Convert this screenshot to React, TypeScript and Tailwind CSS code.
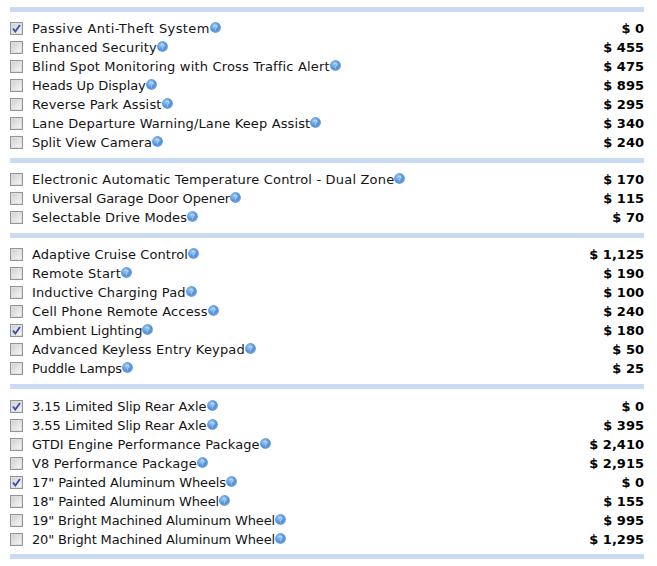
type Option = { label: string; price: string; fit: string; checked?: boolean };

// fit = per-row tracking, the reference font (Verdana) runs a bit different from DejaVu
const groups: { pad: string; options: Option[] }[] = [
  {
    pad: "pt-[7px] pb-[6px]",
    options: [
      { label: "Passive Anti-Theft System", price: "$ 0", checked: true, fit: "tracking-[0.4px]" },
      { label: "Enhanced Security", price: "$ 455", fit: "tracking-[0.18px]" },
      { label: "Blind Spot Monitoring with Cross Traffic Alert", price: "$ 475", fit: "tracking-[0.17px]" },
      { label: "Heads Up Display", price: "$ 895", fit: "tracking-[-0.06px]" },
      { label: "Reverse Park Assist", price: "$ 295", fit: "tracking-[0.16px]" },
      { label: "Lane Departure Warning/Lane Keep Assist", price: "$ 340", fit: "tracking-[0.13px]" },
      { label: "Split View Camera", price: "$ 240", fit: "tracking-[0.06px]" },
    ],
  },
  {
    pad: "pt-[7px] pb-[6px]",
    options: [
      { label: "Electronic Automatic Temperature Control - Dual Zone", price: "$ 170", fit: "tracking-[0.19px]" },
      { label: "Universal Garage Door Opener", price: "$ 115", fit: "tracking-[-0.07px]" },
      { label: "Selectable Drive Modes", price: "$ 70", fit: "tracking-[0.09px]" },
    ],
  },
  {
    pad: "pt-[7px] pb-[6px]",
    options: [
      { label: "Adaptive Cruise Control", price: "$ 1,125", fit: "tracking-[0.09px]" },
      { label: "Remote Start", price: "$ 190", fit: "tracking-[0.25px]" },
      { label: "Inductive Charging Pad", price: "$ 100", fit: "tracking-[0.14px]" },
      { label: "Cell Phone Remote Access", price: "$ 240", fit: "tracking-[0.17px]" },
      { label: "Ambient Lighting", price: "$ 180", checked: true, fit: "tracking-[-0.06px]" },
      { label: "Advanced Keyless Entry Keypad", price: "$ 50", fit: "tracking-[0.17px]" },
      { label: "Puddle Lamps", price: "$ 25", fit: "tracking-[-0.08px]" },
    ],
  },
  {
    pad: "pt-[8px] pb-[5px]",
    options: [
      { label: "3.15 Limited Slip Rear Axle", price: "$ 0", checked: true, fit: "tracking-[-0.04px]" },
      { label: "3.55 Limited Slip Rear Axle", price: "$ 395", fit: "tracking-[-0.04px]" },
      { label: "GTDI Engine Performance Package", price: "$ 2,410", fit: "tracking-[0.1px]" },
      { label: "V8 Performance Package", price: "$ 2,915", fit: "tracking-[0.14px]" },
      { label: '17" Painted Aluminum Wheels', price: "$ 0", checked: true, fit: "tracking-[-0.11px]" },
      { label: '18" Painted Aluminum Wheel', price: "$ 155", fit: "tracking-[-0.12px]" },
      { label: '19" Bright Machined Aluminum Wheel', price: "$ 995", fit: "tracking-[-0.15px]" },
      { label: '20" Bright Machined Aluminum Wheel', price: "$ 1,295", fit: "tracking-[-0.15px]" },
    ],
  },
];

function CheckBox({ checked }: { checked?: boolean }) {
  return (
    <span className="w-[13px] h-[13px] shrink-0 border border-[#939597] bg-gradient-to-br from-[#cfcfcf] to-[#f8f8f8] shadow-[inset_0_0_0_1px_#dedede] flex items-center justify-center">
      {checked && (
        <svg width="9" height="9" viewBox="0 0 9 9">
          <path d="M1 4.5 L3.3 7.5 L8 1" fill="none" stroke="#3f4fb0" strokeWidth="1.9" />
        </svg>
      )}
    </span>
  );
}

function InfoDot() {
  return (
    <svg width="11" height="11" viewBox="0 0 11 11" className="shrink-0 -mt-[3px]">
      <defs>
        <radialGradient id="dot" cx="40%" cy="35%" r="70%">
          <stop offset="0%" stopColor="#a2cbf3" />
          <stop offset="65%" stopColor="#4f90da" />
          <stop offset="100%" stopColor="#7ea9d8" />
        </radialGradient>
      </defs>
      <circle cx="5.5" cy="5.5" r="5.4" fill="url(#dot)" />
      <path d="M4 4.2 C4.2 2.8 7 2.8 7 4.4 C7 5.4 5.5 5.4 5.5 6.6 M5.5 7.6 V8.4" fill="none" stroke="#dcecfb" strokeWidth="0.8" />
    </svg>
  );
}

function Row({ option }: { option: Option }) {
  return (
    <div className="flex items-center h-[19px] pl-[10px] pr-[13px]">
      <CheckBox checked={option.checked} />
      <span className={`ml-[9px] text-[13px] text-[#141414] whitespace-nowrap ${option.fit}`}>{option.label}</span>
      <InfoDot />
      <span className="ml-auto text-[13px] font-bold text-black whitespace-nowrap">{option.price}</span>
    </div>
  );
}

export default function App() {
  return (
    <div className="w-[657px] h-[566px] bg-white overflow-hidden pt-[7px] font-['DejaVu_Sans',Verdana,sans-serif]">
      <div className="ml-[10px] w-[634px] h-[5px] bg-[#c8dbf3]" />
      {groups.map((group, i) => (
        <div key={i}>
          <div className={group.pad}>
            {group.options.map((option) => (
              <Row key={option.label} option={option} />
            ))}
          </div>
          <div className="ml-[10px] w-[634px] h-[5px] bg-[#c8dbf3]" />
        </div>
      ))}
    </div>
  );
}
